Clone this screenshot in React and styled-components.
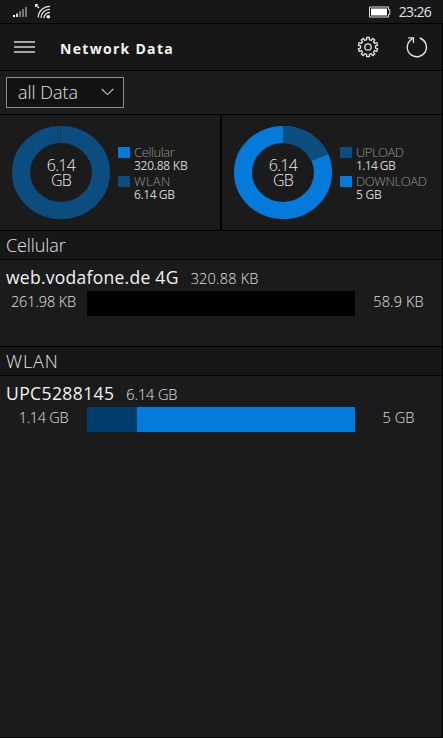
import React from 'react';
import styled, { createGlobalStyle } from 'styled-components';

const GlobalStyle = createGlobalStyle`
    *{
        box-sizing:border-box;
    }
    body{
        margin:0;
        background-color:#000;
    }
    button{
        display:flex;
        padding:0;
        border:0;
        background:none;
        color:inherit;
        font:inherit;
    }
    svg{
        display:block;
    }
`

const Phone = styled.div`
    display:flex;
    flex-direction:column;
    width:443px;
    height:738px;
    overflow:hidden;
    background-color:#000;
    color:#d6d6d6;
    font-family:"Open Sans", "Noto Sans", sans-serif;
    font-weight:300;
`

const StatusBar = styled.header`
    display:flex;
    align-items:center;
    height:23px;
    padding:0 12px 0 12px;
    background-color:#171717;

    .wifi{
        margin-left:5px;
    }
    .battery{
        margin-left:auto;
        margin-right:8px;
    }
`

const Page = styled.main`
    flex:1;
    display:flex;
    flex-direction:column;
    gap:1px;
    width:442px;
    padding-top:1px;
    padding-bottom:1px;
`

const Navbar = styled.nav`
    display:flex;
    align-items:center;
    height:46px;
    padding:0 14px 0 14px;
    background-color:#171717;

    .settings{
        margin-left:auto;
        margin-right:27px;
    }
`

const Text = styled.span`
    font-size:${p => p.$size}px;
    font-weight:${p => p.$weight || 300};
    letter-spacing:${p => p.$spacing || 0}px;
    color:${p => p.$color || '#e2e2e2'};
    line-height:1;
    white-space:nowrap;
`

const Title = styled.h1`
    margin:0 0 0 25px;
    padding-top:3px;
    font-size:14px;
    font-weight:700;
    letter-spacing:1.3px;
    line-height:1;
    color:#f4f4f4;
`

const Filter = styled.div`
    height:43px;
    padding:6px;
    background-color:#1b1b1b;
`

const Select = styled.button`
    && {
        align-items:center;
        justify-content:space-between;
        width:118px;
        height:31px;
        padding:0 9px 1px 11px;
        border:1px solid #8c8c8c;
        background-color:#121212;
    }
`

const Charts = styled.section`
    display:grid;
    grid-template-columns:220px 1fr;
    gap:2px;
    height:115px;
`

const Chart = styled.div`
    display:flex;
    align-items:flex-start;
    padding:11px 0 0 12px;
    background-color:#1b1b1b;
`

const Donut = styled.div`
    display:grid;
    width:98px;
    height:93px;

    > *{
        grid-area:1 / 1;
    }
`

const Total = styled.div`
    place-self:center;
    text-align:center;
    font-size:16px;
    line-height:15px;
    letter-spacing:-.7px;
    color:#eaeaea;
`

const Legend = styled.dl`
    display:grid;
    gap:2px;
    margin:19px 0 0 8px;
`

const LegendItem = styled.div`
    display:grid;
    grid-template-columns:12px auto;
    column-gap:4px;
    grid-template-rows:14px 13px;
    align-items:center;

    &::before{
        content:'';
        width:12px;
        height:11px;
        background-color:${p => p.$color};
    }
    dt, dd{
        grid-column:2;
        margin:0;
        display:flex;
    }
`

const SectionTitle = styled.h2`
    display:flex;
    align-items:center;
    height:28px;
    margin:0;
    padding:0 6px 1px;
    background-color:#171717;
`

const Network = styled.section`
    height:${p => p.$fill ? 'auto' : '86px'};
    flex:${p => p.$fill ? 1 : 'none'};
    padding-top:7px;
    background-color:#1b1b1b;
`

const NetworkHead = styled.div`
    display:flex;
    align-items:baseline;
    gap:12px;
    height:24px;
    padding:2px 6px 0;
`

const Usage = styled.div`
    display:grid;
    grid-template-columns:87px 268px 87px;
    align-items:center;
    justify-items:center;
    height:25px;

    ${Text}{
        padding-bottom:2px;
    }
`

const Bar = styled.div`
    width:268px;
    height:25px;
    background-color:${p => p.$color};
`

const BarPart = styled.div`
    height:100%;
    background-color:#003d6e;
`

const blue = '#047bdb'
const navy = '#0c4d80'

const SignalIcon = () => (
    <svg width="17" height="12" viewBox="0 0 17 12">
        <path d="M1 9h2v2H1z" fill="#fff"/>
        <path d="M4 7.5h2V11H4z" fill="#ddd"/>
        <path d="M7 5h2v6H7zM10 3h2v8h-2zM13 1h2v10h-2z" fill="#777"/>
    </svg>
)

const WifiIcon = () => (
    <svg className="wifi" width="18" height="17" viewBox="0 0 18 17">
        <path d="M1 1h3.4L1 4.4z" fill="#eee"/>
        <path d="M2 2l3 3" stroke="#eee" strokeWidth="1.2"/>
        <g fill="none" stroke="#ddd" strokeWidth="1.3">
            <path d="M4.2 14.6A11.5 11.5 0 0 1 16 3.3"/>
            <path d="M7 15A8.5 8.5 0 0 1 16 6.3"/>
            <path d="M10 15.2A5.8 5.8 0 0 1 16 9.5"/>
        </g>
        <circle cx="14.3" cy="13.7" r="1.8" fill="#fff"/>
    </svg>
)

const BatteryIcon = () => (
    <svg className="battery" width="22" height="12" viewBox="0 0 22 12">
        <path d="M.5 1h19v2.6h1.3v4.8h-1.3V11H.5z" fill="none" stroke="#ddd"/>
        <path d="M2 2.5h16v7H2z" fill="#fff"/>
    </svg>
)

const MenuIcon = () => (
    <svg width="21" height="14" viewBox="0 0 21 14">
        <path d="M0 2h21M0 7h21M0 12h21" stroke="#d5d5d5" strokeWidth="1.3"/>
    </svg>
)

// ten-toothed cog, the tooth outline is repeated around the centre
const GearIcon = () => {
    const points = []
    for (let i = 0; i < 10; i++) {
        [[-10, 7.5], [-8, 9.8], [8, 9.8], [10, 7.5]].forEach(([offset, r]) => {
            const a = (i * 36 + offset) * Math.PI / 180
            points.push(`${(11 + r * Math.sin(a)).toFixed(2)},${(11 - r * Math.cos(a)).toFixed(2)}`)
        })
    }
    return (
        <svg width="22" height="22" viewBox="0 0 22 22" fill="none" stroke="#e4e4e4" strokeWidth="1.3">
            <polygon points={points.join(' ')} strokeLinejoin="round"/>
            <circle cx="11" cy="11" r="3.2"/>
        </svg>
    )
}

const RefreshIcon = () => (
    <svg width="22" height="22" viewBox="0 0 22 22" fill="none" stroke="#e4e4e4" strokeWidth="1.4">
        <path d="M13.8 2A9.6 9.6 0 1 1 4 4.4L7 2"/>
        <path d="M2.2 1.9h5.2v4.8"/>
    </svg>
)

const ChevronIcon = () => (
    <svg width="13" height="8" viewBox="0 0 13 8">
        <path d="M.7 1l5.8 5.6L12.3 1" fill="none" stroke="#c4c4c4" strokeWidth="1.1"/>
    </svg>
)

const DonutChart = ({ color, share, children }) => (
    <Donut>
        <svg width="98" height="93" viewBox="0 0 100 100" preserveAspectRatio="none">
            <circle cx="50" cy="50" r="40.8" fill="none" stroke={color} strokeWidth="18.4"/>
            {share
                ? <circle
                    cx="50" cy="50" r="40.8" fill="none" stroke={navy} strokeWidth="18.4"
                    pathLength="100" strokeDasharray={`${share} 100`} transform="rotate(-90 50 50)"
                />
                : <path d="M46.5 0v18.6M50 0v18.4" stroke="#123a5c" strokeWidth=".9"/>
            }
        </svg>
        <Total>{children}<br/>GB</Total>
    </Donut>
)

const LegendEntry = ({ color, label, value, labelSpacing, valueSpacing }) => (
    <LegendItem $color={color}>
        <dt><Text $size={13} $spacing={labelSpacing} $color="#949494">{label}</Text></dt>
        <dd><Text $size={12} $spacing={valueSpacing} $weight={400} $color="#cfcfcf">{value}</Text></dd>
    </LegendItem>
)

const App = () => {

    return (
        <Phone>
            <GlobalStyle/>
            <StatusBar>
                <SignalIcon/>
                <WifiIcon/>
                <BatteryIcon/>
                <Text $size={14} $spacing={-0.7} $weight={400}>23:26</Text>
            </StatusBar>
            <Page>
                <Navbar>
                    <button><MenuIcon/></button>
                    <Title>Network Data</Title>
                    <button className="settings"><GearIcon/></button>
                    <button><RefreshIcon/></button>
                </Navbar>
                <Filter>
                    <Select>
                        <Text $size={18}>all Data</Text>
                        <ChevronIcon/>
                    </Select>
                </Filter>
                <Charts>
                    <Chart>
                        <DonutChart color={navy}>6.14</DonutChart>
                        <Legend>
                            <LegendEntry color={blue} label="Cellular" value="320.88 KB" labelSpacing={-0.4} valueSpacing={-0.25}/>
                            <LegendEntry color={navy} label="WLAN" value="6.14 GB" labelSpacing={0.3} valueSpacing={-0.4}/>
                        </Legend>
                    </Chart>
                    <Chart>
                        <DonutChart color={blue} share={18.6}>6.14</DonutChart>
                        <Legend>
                            <LegendEntry color={navy} label="UPLOAD" value="1.14 GB" labelSpacing={-0.5} valueSpacing={-0.6}/>
                            <LegendEntry color={blue} label="DOWNLOAD" value="5 GB" labelSpacing={-0.4} valueSpacing={-0.2}/>
                        </Legend>
                    </Chart>
                </Charts>
                <SectionTitle><Text $size={18} $spacing={-0.1}>Cellular</Text></SectionTitle>
                <Network>
                    <NetworkHead>
                        <Text $size={17.5} $spacing={0.27} $weight={400} $color="#f2f2f2">web.vodafone.de 4G</Text>
                        <Text $size={14.5} $spacing={0.2}>320.88 KB</Text>
                    </NetworkHead>
                    <Usage>
                        <Text $size={14.5} $spacing={-0.1}>261.98 KB</Text>
                        <Bar $color="#000"/>
                        <Text $size={14.5} $spacing={0.1}>58.9 KB</Text>
                    </Usage>
                </Network>
                <SectionTitle><Text $size={18} $spacing={0.9}>WLAN</Text></SectionTitle>
                <Network $fill>
                    <NetworkHead>
                        <Text $size={17.5} $spacing={0.4} $weight={400} $color="#f2f2f2">UPC5288145</Text>
                        <Text $size={14.5} $spacing={-0.1}>6.14 GB</Text>
                    </NetworkHead>
                    <Usage>
                        <Text $size={14.5} $spacing={-0.3}>1.14 GB</Text>
                        <Bar $color="#037bdc"><BarPart style={{ width: `${1.14 / 6.14 * 100}%` }}/></Bar>
                        <Text $size={14.5} $spacing={0.1}>5 GB</Text>
                    </Usage>
                </Network>
            </Page>
        </Phone>
    )
}


export default App
